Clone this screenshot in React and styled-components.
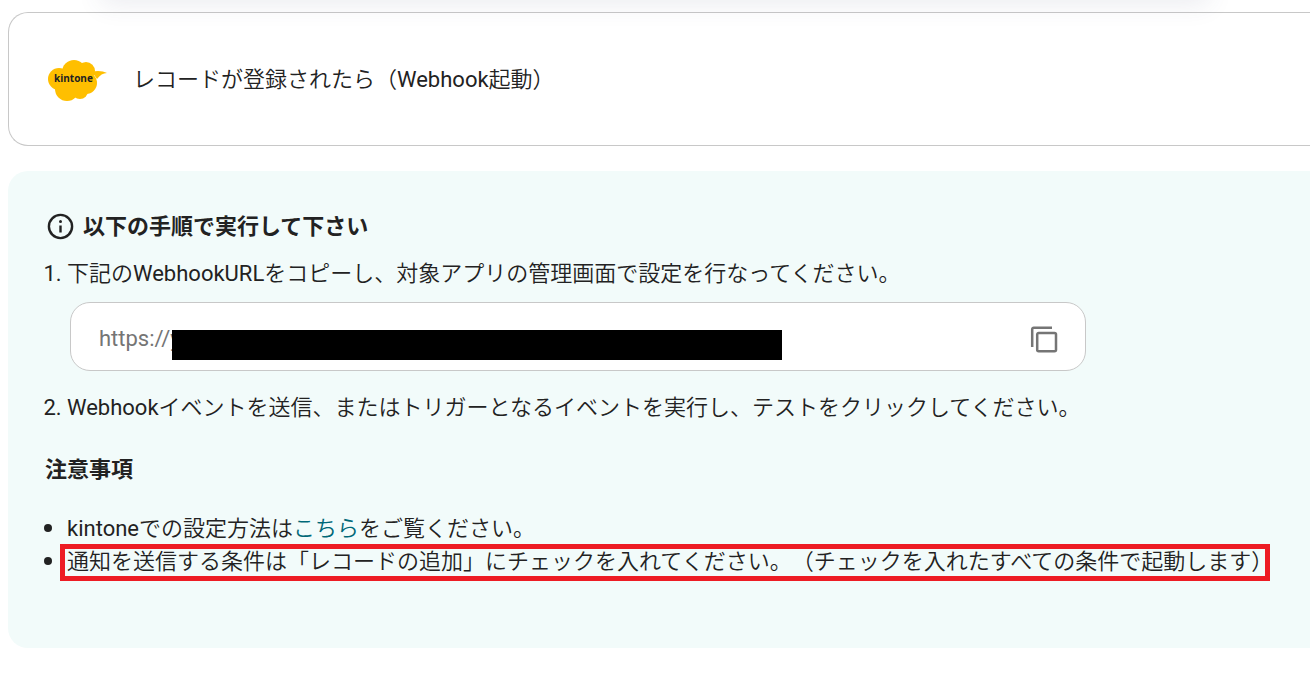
import React, { useState } from 'react';
import styled, { createGlobalStyle } from 'styled-components';

const GlobalStyle = createGlobalStyle`
	* {
		box-sizing: border-box;
	}

	body {
		margin: 0;
		background-color: #ffffff;
		color: #222222;
		font-family: Roboto, 'Noto Sans CJK JP', sans-serif;
		font-size: 22px;
		line-height: 33px;
		text-spacing-trim: space-all;
		overflow: hidden;
	}
`;

const Page = styled.main`
	position: relative;
	display: flex;
	flex-direction: column;
	gap: 25px;
	padding: 12px 0 44px 8px;
`;

const TopShadow = styled.div`
	position: absolute;
	top: -40px;
	left: 8%;
	right: 8%;
	height: 40px;
	box-shadow: 0 0 26px 4px rgba(60, 70, 110, 0.1);
	pointer-events: none;
`;

const TriggerCard = styled.section`
	display: flex;
	align-items: center;
	gap: 25px;
	padding: 43px 39px;
	border: 1px solid #c8c8c8;
	border-right: none;
	border-radius: 20px 0 0 20px;
`;

const TriggerTitle = styled.h1`
	margin: 0;
	font-size: 22px;
	font-weight: 350;
`;

const Latin = styled.span`
	font-weight: 400;
`;

const Logo = styled.svg`
	flex: none;
	width: 60px;
	height: 46px;
`;

const LogoText = styled.text`
	font-family: 'Open Sans', sans-serif;
	font-size: 10px;
	font-weight: 700;
	fill: #222222;
`;

const Panel = styled.section`
	padding: 39px 20px 70px 37px;
	background-color: #f2fbfa;
	border-radius: 20px 0 0 20px;
	font-weight: 350;
`;

const PanelTitle = styled.h2`
	display: flex;
	align-items: center;
	gap: 8px;
	margin: 0 0 14px;
	padding-left: 2px;
	font-size: 22px;
	font-weight: 700;
`;

const Icon = styled.svg`
	display: block;
	flex: none;
	width: 28px;
	height: 28px;
`;

const Steps = styled.ol`
	margin: 0;
	padding-left: 22px;
`;

const Step = styled.li`
	margin-bottom: 20px;

	&::marker {
		font-weight: 400;
	}
`;

const UrlBox = styled.div`
	position: relative;
	display: flex;
	align-items: center;
	max-width: 1016px;
	margin: 12px 0 0 3px;
	padding: 19px 27px 15px 28px;
	background-color: #ffffff;
	border: 1px solid #c8c8c8;
	border-radius: 20px;
`;

const UrlInput = styled.input`
	flex: 1;
	min-width: 0;
	height: 33px;
	padding: 0;
	border: none;
	outline: none;
	background: none;
	color: #757575;
	font: inherit;
	font-weight: 400;
`;

const UrlMask = styled.div`
	position: absolute;
	top: 27px;
	left: 101px;
	width: 610px;
	height: 30px;
	background-color: #000000;
`;

const CopyButton = styled.button`
	padding: 0;
	border: none;
	background: none;
	color: #757575;
	cursor: pointer;
`;

const NotesTitle = styled.h3`
	margin: 29px 0 26px;
	font-size: 22px;
	font-weight: 700;
`;

const Notes = styled.ul`
	margin: 0;
	padding-left: 22px;
	list-style: none;
`;

const Note = styled.li`
	&::before {
		content: '';
		display: inline-block;
		width: 8px;
		height: 8px;
		margin: 0 15px 0 -23px;
		border-radius: 50%;
		background-color: currentColor;
		vertical-align: 4px;
	}
`;

const NoteLink = styled.a`
	color: #006878;
	text-decoration: none;
`;

const Highlight = styled.span`
	position: relative;

	&::after {
		content: '';
		position: absolute;
		inset: -5px 3px -7px -7px;
		border: 5px solid #ed1c24;
		pointer-events: none;
	}
`;

const KintoneLogo = () => (
	<Logo viewBox="0 -4 60 46" role="img" aria-label="kintone">
		<g fill="#ffbf00">
			<circle cx="11" cy="19" r="11" />
			<circle cx="26" cy="12" r="12" />
			<circle cx="38" cy="11" r="9" />
			<circle cx="38" cy="23" r="11" />
			<circle cx="19" cy="29" r="12" />
			<circle cx="32" cy="31" r="8" />
			<circle cx="25" cy="21" r="13" />
			<path d="M44 12c5-2 11-1 15 1-4 0-7 2-10 6z" />
		</g>
		<LogoText x="6" y="22">
			kintone
		</LogoText>
	</Logo>
);

const InfoIcon = () => (
	<Icon viewBox="0 0 28 28" fill="none" stroke="currentColor" strokeWidth="2.4" aria-hidden="true">
		<circle cx="13.5" cy="13.5" r="11.6" />
		<path d="M13.5 12.5v7" />
		<circle cx="13.5" cy="8.5" r="1.5" fill="currentColor" stroke="none" />
	</Icon>
);

const CopyIcon = () => (
	<Icon viewBox="0 0 28 28" fill="none" stroke="currentColor" strokeWidth="2.5" aria-hidden="true">
		<path d="M2.2 22V4.2a1.5 1.5 0 0 1 1.5-1.5h18.3" />
		<rect x="7.2" y="7.9" width="18.8" height="18.4" rx="1.5" />
	</Icon>
);

const App = () => {
	const [url] = useState('https://y');

	const copyUrl = () => {
		navigator.clipboard?.writeText(url);
	};

	return (
		<>
			<GlobalStyle />
			<Page>
				<TriggerCard>
					<KintoneLogo />
					<TriggerTitle>
						レコードが登録されたら（<Latin>Webhook</Latin>起動）
					</TriggerTitle>
				</TriggerCard>
				<Panel>
					<PanelTitle>
						<InfoIcon />
						以下の手順で実行して下さい
					</PanelTitle>
					<Steps>
						<Step>
							<label htmlFor="webhook-url">
								下記の<Latin>WebhookURL</Latin>をコピーし、対象アプリの管理画面で設定を行なってください。
							</label>
							<UrlBox>
								<UrlInput id="webhook-url" type="text" value={url} readOnly />
								<UrlMask />
								<CopyButton type="button" aria-label="コピー" onClick={copyUrl}>
									<CopyIcon />
								</CopyButton>
							</UrlBox>
						</Step>
						<Step>
							<Latin>Webhook</Latin>イベントを送信、またはトリガーとなるイベントを実行し、テストをクリックしてください。
						</Step>
					</Steps>
					<NotesTitle>注意事項</NotesTitle>
					<Notes>
						<Note>
							<Latin>kintone</Latin>での設定方法は<NoteLink href="#kintone">こちら</NoteLink>をご覧ください。
						</Note>
						<Note>
							<Highlight>
								通知を送信する条件は「レコードの追加」にチェックを入れてください。（チェックを入れたすべての条件で起動します）
							</Highlight>
						</Note>
					</Notes>
				</Panel>
			</Page>
			<TopShadow />
		</>
	);
};

export default App;
